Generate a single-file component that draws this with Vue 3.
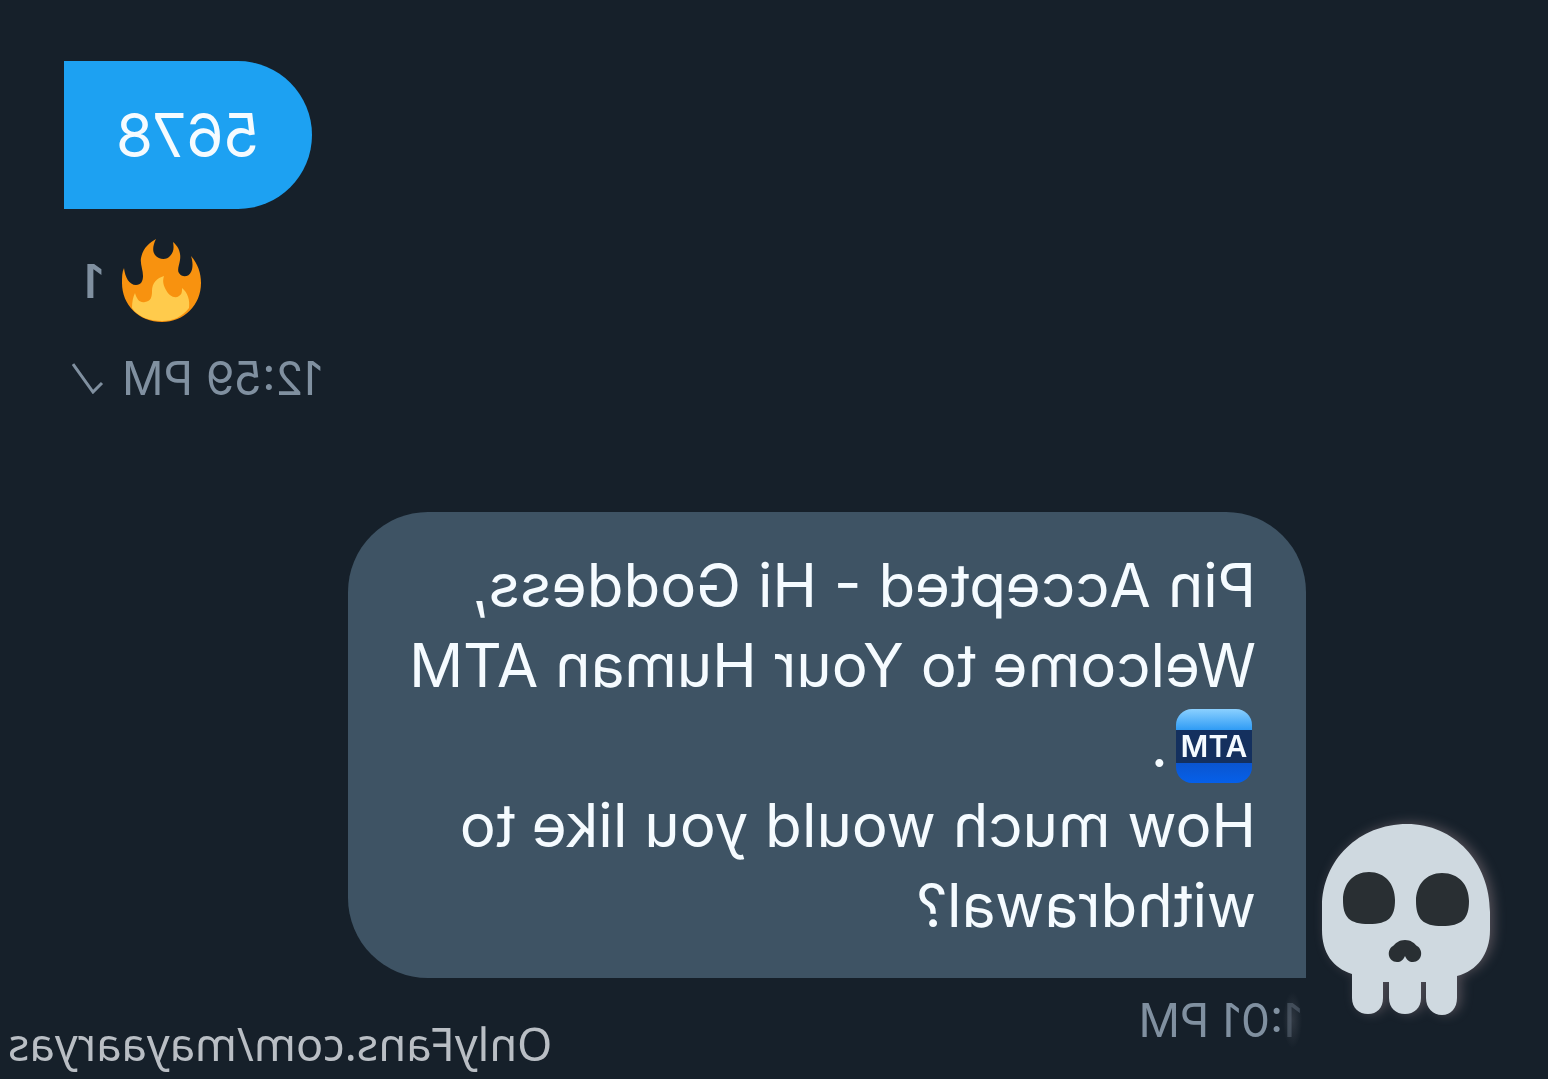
<script setup>
import { ref } from 'vue'

const sent = ref({ text: '5678', reactions: 1, time: '12:59 PM' })

const received = ref({
  intro: ['Pin Accepted - Hi Goddess,', 'Welcome to Your Human ATM'],
  question: ['How much would you like to', 'withdrawal?'],
  hour: '1',
  time: ':01 PM'
})

const watermark = 'OnlyFans.com/mayaaryas'
</script>

<template>
  <main class="chat">
    <section class="sent">
      <p class="bubble bubble-sent">{{ sent.text }}</p>
      <div class="reaction">
        <svg class="flame" viewBox="0 0 81 83" aria-hidden="true">
          <path
            fill="#f8920f"
            d="M35 0C32 6 31 12 34 16C38 21 46 21 49 17C53 13 53 8 52 3C58 8 60 14 59 21C58 27 56 31 58 34C61 39 68 38 70 33C72 29 72 23 70 17C77 25 80 34 80 44C80 66 63 83 41 83C18 83 1 66 1 44C1 38 1 33 3 29C4 38 8 46 15 46C20 46 22 42 22 37C22 31 19 25 20 19C22 9 28 4 35 0Z"
          />
          <path
            fill="#ffcb4c"
            d="M43 37C41 43 43 47 45 51C48 57 54 60 58 57C61 55 61 53 61 49C67 54 69 61 68 69C61 78 52 82 41 82C29 82 17 78 11 69C11 63 12 58 14 54C16 61 19 64 24 63C30 62 31 58 31 52C31 44 36 39 43 37Z"
          />
        </svg>
        <span class="count">{{ sent.reactions }}</span>
      </div>
      <div class="time time-sent">
        <span>{{ sent.time }}</span>
        <svg class="check" viewBox="0 0 32 32" aria-hidden="true">
          <path d="M2 21L11 30L31 2" fill="none" stroke="#8090a0" stroke-width="3" />
        </svg>
      </div>
    </section>

    <section class="received">
      <svg class="skull" viewBox="0 0 168 192" aria-hidden="true">
        <path
          fill="#cfd9e0"
          d="M85 0C132 0 168 38 168 88V106C168 130 155 147 135 152V174C135 184 129 191 120 191C111 191 104 184 104 174V158H99V174C99 184 92 190 83 190C74 190 67 184 67 174V158H61V174C61 184 55 190 46 190C37 190 30 184 30 174V150C11 144 0 129 0 106V83C0 36 37 0 85 0Z"
        />
        <path
          fill="#292f33"
          d="M47 48C63 48 73 60 73 76C73 93 67 100 47 100C27 100 21 93 21 76C21 60 31 48 47 48ZM120 49C137 49 147 61 147 77C147 95 140 102 120 102C101 102 94 95 94 77C94 61 104 49 120 49Z"
        />
        <path
          fill="#292f33"
          d="M83 116C89 116 92 119 95 122C102 126 100 138 91 138C87 138 85 136 83 132C81 136 79 138 75 138C66 138 64 126 71 122C74 119 77 116 83 116Z"
        />
      </svg>
      <div class="message">
        <p class="bubble bubble-received">
          <template v-for="line in received.intro" :key="line">{{ line }}<br /></template>
          <span class="atm"><span class="atm-label">ATM</span></span><span class="dot">.</span><br />
          <template v-for="line in received.question" :key="line">{{ line }}<br /></template>
        </p>
        <div class="time time-received">
          <span class="faded">{{ received.hour }}</span>{{ received.time }}
        </div>
      </div>
    </section>

    <div class="watermark">{{ watermark }}</div>
  </main>
</template>

<style>
html,
body {
  background: #16202a;
}
</style>

<style scoped>
/* the whole conversation is flipped, as seen in a mirror */
.chat {
  position: relative;
  box-sizing: border-box;
  min-height: 100vh;
  padding: 61px 64px 36px 58px;
  overflow: hidden;
  background: #16202a;
  font-family: Inter, 'Liberation Sans', sans-serif;
  transform: scaleX(-1);
}

.bubble {
  margin: 0;
  color: #f5fbff;
  font-size: 60px;
  line-height: 80px;
}

.sent {
  display: flex;
  flex-direction: column;
  align-items: flex-end;
}

.bubble-sent {
  padding: 34px 52px;
  border-radius: 74px 0 0 74px;
  background: #1da1f2;
}

.reaction {
  display: flex;
  align-items: center;
  gap: 18px;
  margin: 30px 20px 0 0;
}

/* emoji keep their own orientation */
.flame,
.skull {
  flex: none;
  transform: scaleX(-1);
}

.flame {
  width: 81px;
  height: 83px;
}

.count {
  color: #8090a0;
  font-size: 46px;
  font-weight: 600;
  line-height: 52px;
}

.time {
  color: #8090a0;
  font-size: 46px;
  line-height: 52px;
}

.time-sent {
  display: flex;
  align-items: center;
  gap: 18px;
  margin: 30px 8px 0 0;
}

.check {
  width: 32px;
  height: 32px;
}

.received {
  display: flex;
  align-items: flex-end;
  gap: 16px;
  margin-top: 108px;
}

.skull {
  width: 168px;
  height: 192px;
  margin-bottom: 30px;
  filter: drop-shadow(4px -1px 6px rgba(190, 160, 165, 0.35));
}

.message {
  flex: 0 0 67.2%;
}

.bubble-received {
  padding: 33px 50px;
  border-radius: 80px 80px 80px 0;
  background: #3e5364;
  white-space: nowrap;
}

.atm {
  display: inline-flex;
  align-items: center;
  width: 76px;
  height: 74px;
  margin: 4px 0 0 4px;
  border-radius: 16px;
  background: linear-gradient(#8bd0ff 0, #2f9cf5 21px, #14305e 21px, #14305e 54px, #0b55cf 54px, #0560ea 100%);
  vertical-align: top;
}

.atm-label {
  width: 100%;
  font-size: 30px;
  font-weight: 600;
  line-height: 34px;
  text-align: center;
}

.dot {
  margin-left: 8px;
}

.time-received {
  margin-top: 16px;
  padding-left: 4px;
}

/* smudge over the first digit */
.faded {
  background: radial-gradient(closest-side, rgba(150, 150, 160, 0.2), transparent);
  color: rgba(128, 144, 160, 0.35);
}

.watermark {
  position: absolute;
  right: 8px;
  bottom: 8px;
  color: #b9bec4;
  font-family: 'Noto Sans', 'Open Sans', sans-serif;
  font-size: 45px;
  line-height: 60px;
}
</style>
